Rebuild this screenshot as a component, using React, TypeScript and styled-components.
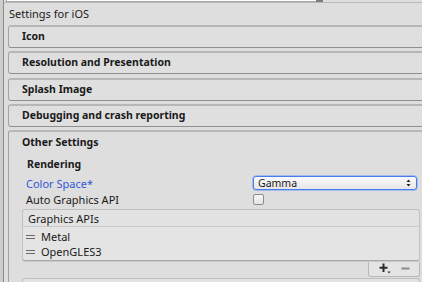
import React from "react";
import styled, { createGlobalStyle } from "styled-components";

const Global = createGlobalStyle`
  html, body { margin: 0; padding: 0; background: #dedede; }
  body { font-family: "Noto Sans", "DejaVu Sans", sans-serif; font-size: 11px; color: #1a1a1a; }
  * { box-sizing: border-box; }
`;

const Root = styled.div`
  width: 422px;
  height: 282px;
  overflow: hidden;
  display: flex;
  background: #dedede;
`;

const Gutter = styled.div`
  width: 3px;
  flex: none;
  background: #cdcdcd;
`;

const Panel = styled.div`
  flex: 1;
  min-width: 0;
  border-left: 1px solid #8c8c8c;
  display: flex;
  flex-direction: column;
`;

const TopStrip = styled.div`
  height: 3px;
  flex: none;
  display: flex;
  align-items: flex-start;
  border-bottom: 1px solid #b9b9b9;
  padding-left: 2px;
`;

const TopField = styled.div`
  width: 310px;
  height: 2px;
  background: #ffffff;
  border-left: 1px solid #a6a6a6;
  border-bottom: 1px solid #a6a6a6;
`;

const TopNub = styled.div`
  width: 7px;
  height: 2px;
  background: #7d7d7d;
`;

const Body = styled.div`
  display: flex;
  flex-direction: column;
  padding-left: 4px;
`;

const Title = styled.div`
  height: 22px;
  line-height: 20px;
  padding-left: 1px;
  padding-top: 1px;
  white-space: nowrap;
`;

const Foldout = styled.div<{ $gap: number }>`
  height: 23px;
  margin-top: ${(p) => p.$gap}px;
  margin-right: -20px;
  border-top: 2px solid #b7b7b7;
  border-bottom: 1px solid #8f8f8f;
  border-left: 1px solid #a3a3a3;
  border-radius: 3px 0 0 3px;
  background: #dfdfdf;
  display: flex;
  align-items: center;
  padding-left: 13px;
  padding-bottom: 2px;
  font-weight: 700;
  font-size: 10.5px;
  white-space: nowrap;
`;

const OpenBox = styled.div`
  margin-top: 3px;
  margin-right: -20px;
  border-top: 2px solid #b7b7b7;
  border-left: 1px solid #a3a3a3;
  border-radius: 3px 0 0 0;
  background: #dedede;
  display: flex;
  flex-direction: column;
  height: 200px;
`;

const OpenHeader = styled.div`
  height: 21px;
  display: flex;
  align-items: center;
  padding-left: 13px;
  padding-bottom: 1px;
  font-weight: 700;
  font-size: 10.5px;
  white-space: nowrap;
`;

const Content = styled.div`
  display: flex;
  flex-direction: column;
  padding-left: 17px;
  padding-right: 22px;
`;

const GroupLabel = styled.div`
  height: 21px;
  margin-top: 1px;
  display: flex;
  align-items: center;
  padding-left: 1px;
  padding-bottom: 2px;
  font-weight: 700;
  font-size: 10.5px;
  white-space: nowrap;
`;

const Row = styled.div`
  height: 16px;
  display: grid;
  grid-template-columns: 227px 1fr;
  align-items: center;
`;

const Label = styled.div<{ $modified?: boolean }>`
  color: ${(p) => (p.$modified ? "#3157d6" : "#1a1a1a")};
  white-space: nowrap;
  line-height: 15px;
`;

const Popup = styled.div`
  height: 14px;
  margin-right: 3px;
  border: 1px solid #4a7cf0;
  box-shadow: 0 0 0 0.5px #6f97f3;
  border-radius: 3px;
  background: linear-gradient(#fbfbfb, #e6e6e6);
  display: flex;
  align-items: center;
  justify-content: space-between;
  padding: 0 5px 0 4px;
  font-size: 10.5px;
  line-height: 12px;
`;

const Check = styled.div`
  width: 11px;
  height: 11px;
  border: 1px solid #8d8d8d;
  border-radius: 2px;
  background: linear-gradient(#f8f8f8, #e4e4e4);
  margin-top: 1px;
`;

const List = styled.div`
  margin-left: -4px;
  margin-top: 2px;
  display: flex;
  flex-direction: column;
`;

const ListHead = styled.div`
  height: 18px;
  border: 1px solid #c0c0c0;
  border-bottom-color: #c9c9c9;
  border-radius: 3px 3px 0 0;
  background: #e2e2e2;
  display: flex;
  align-items: center;
  padding-left: 5px;
  white-space: nowrap;
`;

const ListBody = styled.div`
  height: 34px;
  border: 1px solid #c3c3c3;
  border-top: none;
  border-bottom: 1px solid #a9a9a9;
  box-shadow: 0 1px 0 #c9c9c9;
  border-radius: 0 0 3px 3px;
  background: #e4e4e4;
  padding-top: 2px;
  display: flex;
  flex-direction: column;
`;

const Item = styled.div`
  height: 15px;
  display: flex;
  align-items: center;
  padding-left: 3px;
  gap: 6px;
  white-space: nowrap;
`;

const Handle = styled.span`
  width: 9px;
  height: 4px;
  border-top: 1px solid #6a6a6a;
  border-bottom: 1px solid #6a6a6a;
  margin-top: 1px;
`;

const FooterRow = styled.div`
  display: flex;
  justify-content: flex-end;
  margin-top: 1px;
`;

const Footer = styled.div`
  width: 52px;
  height: 15px;
  border: 1px solid #b8b8b8;
  border-top: none;
  border-radius: 0 0 3px 3px;
  background: #e4e4e4;
  display: flex;
  align-items: center;
  justify-content: space-around;
  padding: 0 4px 1px 5px;
`;

const NextHead = styled(ListHead)`
  margin-top: 1px;
`;

const Arrows = () => (
  <svg width="5" height="8" viewBox="0 0 5 8">
    <path d="M2.5 0.5 L4.5 3 H0.5 Z M2.5 7.5 L4.5 5 H0.5 Z" fill="#222" />
  </svg>
);

const PlusIcon = () => (
  <svg width="12" height="11" viewBox="0 0 12 11">
    <path d="M4.5 0.5 V9 M0.5 4.7 H8.5" stroke="#2a2a2a" strokeWidth="2" />
    <path d="M8.5 8.5 H11.5 L10 10.5 Z" fill="#2a2a2a" />
  </svg>
);

const MinusIcon = () => (
  <svg width="9" height="9" viewBox="0 0 9 9">
    <path d="M0.5 4.5 H8.5" stroke="#8a8a8a" strokeWidth="2" />
  </svg>
);

const headers: { name: string; gap: number }[] = [
  { name: "Icon", gap: 0 },
  { name: "Resolution and Presentation", gap: 3 },
  { name: "Splash Image", gap: 4 },
  { name: "Debugging and crash reporting", gap: 3 },
];

export default function App() {
  return (
    <Root>
      <Global />
      <Gutter />
      <Panel>
        <TopStrip>
          <TopField />
          <TopNub />
        </TopStrip>
        <Body>
          <Title>Settings for iOS</Title>
          {headers.map((h) => (
            <Foldout key={h.name} $gap={h.gap}>
              {h.name}
            </Foldout>
          ))}
          <OpenBox>
            <OpenHeader>Other Settings</OpenHeader>
            <Content>
              <GroupLabel>Rendering</GroupLabel>
              <Row>
                <Label $modified>Color Space*</Label>
                <Popup>
                  <span>Gamma</span>
                  <Arrows />
                </Popup>
              </Row>
              <Row>
                <Label>Auto Graphics API</Label>
                <Check />
              </Row>
              <List>
                <ListHead>Graphics APIs</ListHead>
                <ListBody>
                  <Item>
                    <Handle />
                    Metal
                  </Item>
                  <Item>
                    <Handle />
                    OpenGLES3
                  </Item>
                </ListBody>
                <FooterRow>
                  <Footer>
                    <PlusIcon />
                    <MinusIcon />
                  </Footer>
                </FooterRow>
                <NextHead>Color Gamut</NextHead>
              </List>
            </Content>
          </OpenBox>
        </Body>
      </Panel>
    </Root>
  );
}
